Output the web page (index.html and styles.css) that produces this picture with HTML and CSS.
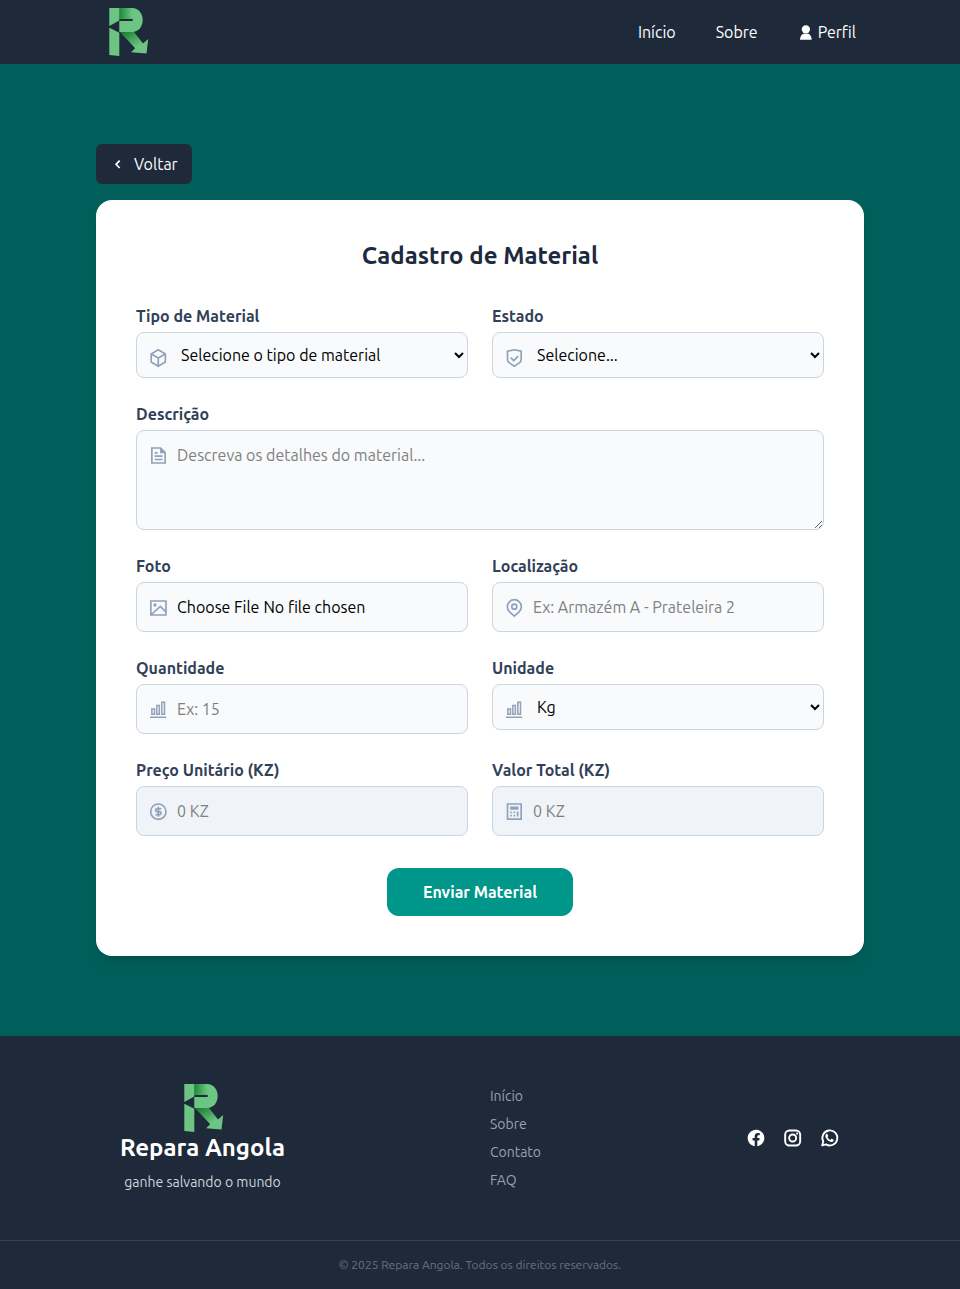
FILE: index.html
```html
<!DOCTYPE html>
<html lang="pt">
<head>
<meta charset="utf-8">
<meta name="viewport" content="width=device-width, initial-scale=1">
<title>Cadastro de Material</title>
<link rel="stylesheet" href="styles.css">
</head>
<body>
<svg class="defs" width="0" height="0" aria-hidden="true">
  <defs>
    <linearGradient id="fold-top" x1="0" x2="1" y1="0" y2="0"><stop offset="0" stop-color="#1c8a35"/><stop offset="1" stop-color="#6cc583"/></linearGradient>
    <linearGradient id="fold-leg" x1="0" x2="0.6" y1="0" y2="0.7"><stop offset="0" stop-color="#14762a"/><stop offset="1" stop-color="#6cc583"/></linearGradient>
    <symbol id="logo" viewBox="0 0 48 48">
      <path fill="#6cc583" d="M5.300 0h10v12.500L5.300 18z"/>
      <path fill="#6cc583" d="M5.300 19.700l10 5V48l-10-1z"/>
      <path fill="#6cc583" d="M15.300 0h13c6 0 10.400 5 10.400 12s-4.400 12-10.400 12h-13V13h13.400v-2.300H15.300z"/>
      <path fill="url(#fold-top)" d="M15.300 0h13v10.700h-13z"/>
      <path fill="url(#fold-leg)" d="M16 24h14l9 11.500 5.200-4.500-1.700 14.400L27 44.200l4.200-4z"/>
    </symbol>
    <symbol id="bars" viewBox="0 0 24 24"><path fill="none" stroke="currentColor" stroke-width="1.800" d="M2.400 20.600h19.400M4.600 10.900h3.200v6.200H4.600zM10.600 6.600h3v10.500h-3zM16.600 2.600h3.200v14.500h-3.200z"/></symbol>
  </defs>
</svg>

<header class="topbar">
  <div class="container topbar-inner">
    <a href="#" aria-label="Repara Angola"><svg class="logo"><use href="#logo"/></svg></a>
    <nav class="nav" aria-label="Principal">
      <a href="#">Início</a>
      <a href="#">Sobre</a>
      <a href="#" class="profile"><svg class="icon-sm" viewBox="0 0 24 24"><circle cx="11.800" cy="8" r="6.200" fill="currentColor"/><path fill="currentColor" d="M3 23.500c0-5 2.500-8.500 5.500-9h6.500c3 .5 5.500 4 5.500 9z"/></svg>Perfil</a>
    </nav>
  </div>
</header>

<main class="container page">
  <a href="#" class="back"><svg class="icon" viewBox="0 0 24 24"><path fill="none" stroke="currentColor" stroke-width="2" d="M14 8l-4.300 4.400L14 16.800"/></svg>Voltar</a>

  <form class="card">
    <h1 class="title">Cadastro de Material</h1>
    <div class="fields">
      <div class="field">
        <label for="tipo">Tipo de Material</label>
        <div class="control">
          <svg class="icon lead" viewBox="0 0 24 24"><path fill="none" stroke="currentColor" stroke-width="2" d="M12.300 2.200l8.500 4.900v9.800l-8.500 4.900-8.500-4.900V7.100zM3.800 7.100l8.500 4.900 8.500-4.900M12.300 12v9.800"/></svg>
          <select id="tipo"><option>Selecione o tipo de material</option></select>
        </div>
      </div>
      <div class="field">
        <label for="estado">Estado</label>
        <div class="control">
          <svg class="icon lead" viewBox="0 0 24 24"><path fill="none" stroke="currentColor" stroke-width="2" d="M12.400 2.100l8.200 1.800v9.900c0 1.600-.8 3.200-2.200 4.100l-6 4-6-4c-1.400-.9-2.200-2.500-2.200-4.100V3.900zM8.100 11.500l3.600 3.500L17 9.700"/></svg>
          <select id="estado"><option>Selecione...</option></select>
        </div>
      </div>
      <div class="field wide">
        <label for="descricao">Descrição</label>
        <div class="control">
          <svg class="icon lead" viewBox="0 0 24 24"><path fill="none" stroke="currentColor" stroke-width="2" d="M4.600 2.400h10.500l5.500 5.500v12.500h-16zM8 8.200h3.500M8 12.200h9.500M8 16.200h9.500"/><path fill="currentColor" d="M14.500 2v6.800h6.800z"/></svg>
          <textarea id="descricao" placeholder="Descreva os detalhes do material..."></textarea>
        </div>
      </div>
      <div class="field">
        <label for="foto">Foto</label>
        <div class="control">
          <svg class="icon lead" viewBox="0 0 24 24"><path fill="none" stroke="currentColor" stroke-width="2" d="M3.400 3.600h18.200v16.800H3.400zM4.400 19.500L14.800 10l7 7"/><circle cx="8.400" cy="8.400" r="2" fill="currentColor"/></svg>
          <input id="foto" type="file">
        </div>
      </div>
      <div class="field">
        <label for="local">Localização</label>
        <div class="control">
          <svg class="icon lead" viewBox="0 0 24 24"><path fill="none" stroke="currentColor" stroke-width="2" d="M12.400 21.800l-5.700-5.200a8.400 8.400 0 1 1 11.400 0z"/><circle cx="12.400" cy="10.400" r="3" fill="none" stroke="currentColor" stroke-width="2"/></svg>
          <input id="local" type="text" placeholder="Ex: Armazém A - Prateleira 2">
        </div>
      </div>
      <div class="field">
        <label for="quantidade">Quantidade</label>
        <div class="control">
          <svg class="icon lead"><use href="#bars"/></svg>
          <input id="quantidade" type="text" inputmode="numeric" placeholder="Ex: 15">
        </div>
      </div>
      <div class="field">
        <label for="unidade">Unidade</label>
        <div class="control">
          <svg class="icon lead"><use href="#bars"/></svg>
          <select id="unidade"><option>Kg</option></select>
        </div>
      </div>
      <div class="field">
        <label for="preco">Preço Unitário (KZ)</label>
        <div class="control">
          <svg class="icon lead" viewBox="0 0 24 24"><circle cx="12.400" cy="11.600" r="9.200" fill="none" stroke="currentColor" stroke-width="2"/><path fill="none" stroke="currentColor" stroke-width="2" d="M15.900 8.100h-5a1.750 1.750 0 0 0 0 3.500h3a1.750 1.750 0 0 1 0 3.500h-5M12.400 5.600v12"/></svg>
          <input id="preco" class="locked" type="text" placeholder="0 KZ" readonly>
        </div>
      </div>
      <div class="field">
        <label for="total">Valor Total (KZ)</label>
        <div class="control">
          <svg class="icon lead" viewBox="0 0 24 24"><path fill="none" stroke="currentColor" stroke-width="2" d="M4.200 2.400h16.400v18.200H4.200z"/><path fill="currentColor" d="M7.400 5.400h10v4h-10zM7.400 11.400h2v2h-2zM11.400 11.400h2v2h-2zM7.400 15.400h2v2h-2zM11.400 15.400h2v2h-2zM15.400 11.400h2v6h-2z"/></svg>
          <input id="total" class="locked" type="text" placeholder="0 KZ" readonly>
        </div>
      </div>
    </div>
    <button type="submit" class="submit">Enviar Material</button>
  </form>
</main>

<footer class="footer">
  <div class="container footer-main">
    <div class="brand">
      <svg class="logo"><use href="#logo"/></svg>
      <h2>Repara Angola</h2>
      <p>ganhe salvando o mundo</p>
    </div>
    <ul class="links">
      <li><a href="#">Início</a></li>
      <li><a href="#">Sobre</a></li>
      <li><a href="#">Contato</a></li>
      <li><a href="#">FAQ</a></li>
    </ul>
    <div class="social">
      <a href="#" aria-label="Facebook"><svg class="icon" viewBox="0 0 24 24"><path fill="currentColor" d="M12.001 2.002c-5.522 0-9.999 4.477-9.999 9.999 0 4.990 3.656 9.126 8.437 9.879v-6.988h-2.540v-2.891h2.540V9.798c0-2.508 1.493-3.891 3.776-3.891 1.094 0 2.240.195 2.240.195v2.459h-1.264c-1.240 0-1.628.772-1.628 1.563v1.875h2.771l-.443 2.891h-2.328v6.988C18.344 21.129 22 16.992 22 12.001c0-5.522-4.477-9.999-9.999-9.999z"/></svg></a>
      <a href="#" aria-label="Instagram"><svg class="icon" viewBox="0 0 24 24"><rect x="2.600" y="3" width="18" height="18" rx="5" fill="none" stroke="currentColor" stroke-width="2.300"/><circle cx="11.600" cy="12" r="4.200" fill="none" stroke="currentColor" stroke-width="2.300"/><circle cx="16.900" cy="6.700" r="1.300" fill="currentColor"/></svg></a>
      <a href="#" aria-label="WhatsApp"><svg class="icon" viewBox="0 0 24 24"><path fill="none" stroke="currentColor" stroke-width="2.200" stroke-linejoin="round" d="M2.600 20.900l1.300-4.700a9 9 0 1 1 3.400 3.500z"/><path fill="currentColor" d="M8.200 6.900c.4 0 .6.100.8.600l.8 1.900c.1.300.1.500-.1.800l-.8 1c.8 1.500 2 2.600 3.500 3.200l1-1.200c.2-.2.400-.3.700-.2l1.900.9c.4.200.5.400.4.900-.2 1.300-1.300 2.100-2.600 2.100-3.600-.4-7.200-4-7.400-7.200 0-1.200.8-2.400 1.800-2.800z"/></svg></a>
    </div>
  </div>
  <p class="copyright">© 2025 Repara Angola. Todos os direitos reservados.</p>
</footer>
</body>
</html>
```
FILE: styles.css
```css
*, *::before, *::after { box-sizing: border-box; }

body {
  margin: 0;
  background: #005f5a;
  color: #000;
  font: 16px/24px Ubuntu, Lato, "Noto Sans", sans-serif;
}

h1, h2, p, ul { margin: 0; padding: 0; }
ul { list-style: none; }
a { color: inherit; text-decoration: none; }
svg { display: block; flex: none; }
.defs { position: absolute; }

.container { width: 80%; margin: 0 auto; }
.logo { width: 48px; height: 48px; }
.icon { width: 20px; height: 20px; }
.icon-sm { width: 16px; height: 16px; }

.topbar { background: #1e2939; color: #fff; }
.topbar-inner {
  display: flex;
  align-items: center;
  justify-content: space-between;
  padding: 8px;
}
.nav { display: flex; gap: 40px; }
.profile { display: flex; align-items: center; gap: 4px; }

.page { padding: 80px 0; }
.back {
  display: inline-flex;
  align-items: center;
  gap: 6px;
  padding: 8px 14px 8px 12px;
  border-radius: 6px;
  background: #1e2939;
  color: #fff;
}

.card {
  margin-top: 16px;
  padding: 40px;
  border-radius: 16px;
  background: #fff;
  box-shadow: 0 10px 15px -3px rgb(0 0 0 / 10%), 0 4px 6px -4px rgb(0 0 0 / 10%);
}
.title {
  margin-bottom: 32px;
  color: #1d293d;
  font-size: 24px;
  line-height: 32px;
  font-weight: 700;
  text-align: center;
}
.fields {
  display: grid;
  grid-template-columns: 1fr 1fr;
  gap: 24px;
  align-items: start;
}
.wide { grid-column: 1 / -1; }
.field { display: grid; gap: 4px; }
.field label { color: #314158; font-weight: 700; }
.control { position: relative; }
.lead {
  position: absolute;
  left: 12px;
  top: 16px;
  color: #90a1b9;
  pointer-events: none;
}

.control input, .control select, .control textarea {
  display: block;
  width: 100%;
  margin: 0;
  padding: 12px 12px 12px 40px;
  border: 1px solid #cad5e2;
  border-radius: 8px;
  background: #f8fafc;
  color: #000;
  font: inherit;
}
.control select { height: 46px; padding-right: 0; }
.control textarea { height: 100px; resize: vertical; }
.control .locked { background: #f0f4f8; }
.control ::placeholder { color: #808080; opacity: 1; }
.control ::file-selector-button {
  margin: 0 4px 0 0;
  padding: 0;
  border: 0;
  background: transparent;
  color: inherit;
  font: inherit;
}

.submit {
  display: block;
  margin: 32px auto 0;
  padding: 12px 36px;
  border: 0;
  border-radius: 12px;
  background: #009689;
  color: #fff;
  font: inherit;
  font-weight: 700;
}

.footer { background: #1e2939; color: #fff; }
.footer-main {
  display: flex;
  align-items: center;
  justify-content: space-between;
  padding: 48px 24px;
}
.brand { display: flex; flex-direction: column; align-items: center; }
.brand h2 { font-size: 24px; line-height: 32px; font-weight: 700; }
.brand p { margin-top: 8px; color: #d1d5dc; font-size: 14px; line-height: 20px; }
.links { display: grid; gap: 8px; color: #99a1af; font-size: 14px; line-height: 20px; }
.social { display: flex; gap: 17px; }
.copyright {
  padding: 16px;
  border-top: 1px solid #364153;
  color: #6a7282;
  font-size: 12px;
  line-height: 16px;
  text-align: center;
}
```
